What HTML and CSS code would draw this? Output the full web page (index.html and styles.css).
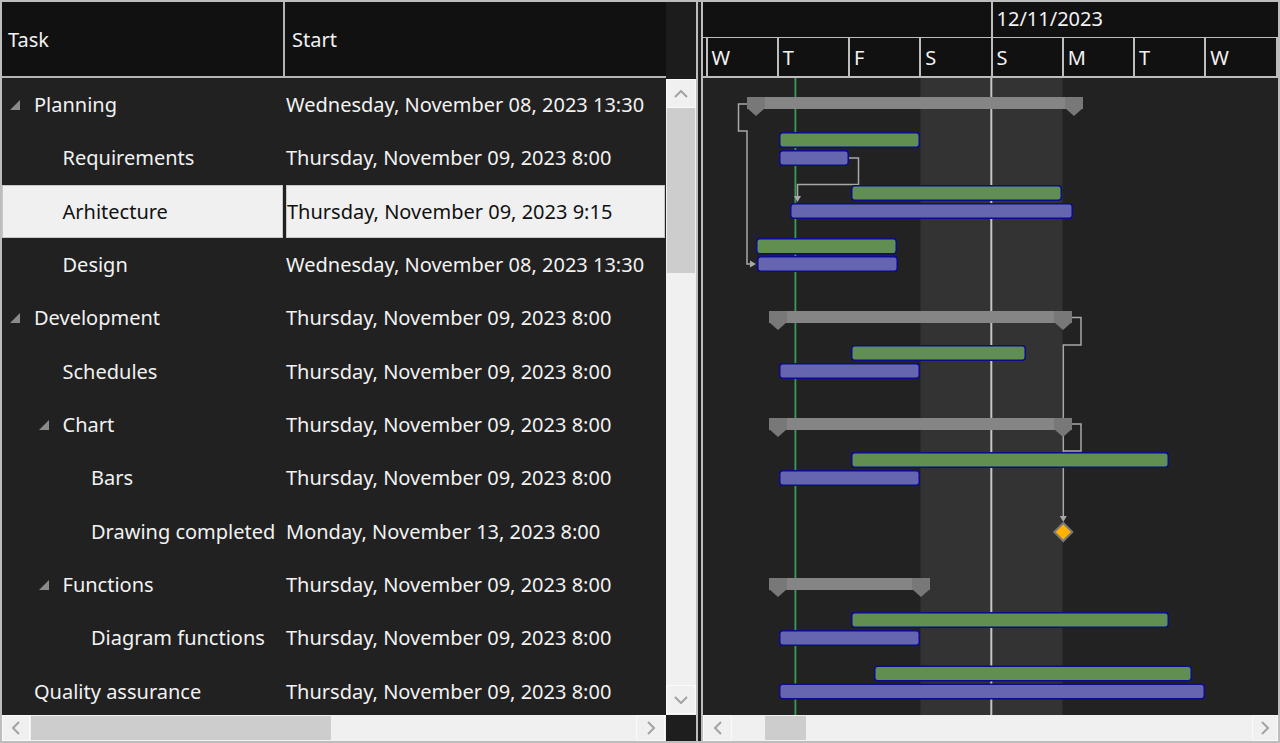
FILE: index.html
```html
<!DOCTYPE html>
<html lang="en">
<head>
<meta charset="utf-8">
<title>Gantt</title>
<link rel="stylesheet" href="styles.css">
</head>
<body>
<div class="app">
  <div class="grid-pane">
    <div class="grid-main">
      <div class="grid-cols">
        <div class="grid-head">
          <div class="gh-cell gh-task">Task</div>
          <div class="gh-cell gh-start">Start</div>
        </div>
        <div class="grid-body">
          <div class="row"><div class="cell c-task l0"><span class="tog"><svg class="tri" width="10" height="10" viewBox="0 0 10 10"><polygon points="10,0 10,10 0,10"/></svg></span>Planning</div><div class="cell c-start">Wednesday, November 08, 2023 13:30</div></div>
          <div class="row"><div class="cell c-task l1"><span class="tog"></span>Requirements</div><div class="cell c-start">Thursday, November 09, 2023 8:00</div></div>
          <div class="row sel"><div class="cell c-task l1"><span class="tog"></span>Arhitecture</div><div class="cell c-start">Thursday, November 09, 2023 9:15</div></div>
          <div class="row"><div class="cell c-task l1"><span class="tog"></span>Design</div><div class="cell c-start">Wednesday, November 08, 2023 13:30</div></div>
          <div class="row"><div class="cell c-task l0"><span class="tog"><svg class="tri" width="10" height="10" viewBox="0 0 10 10"><polygon points="10,0 10,10 0,10"/></svg></span>Development</div><div class="cell c-start">Thursday, November 09, 2023 8:00</div></div>
          <div class="row"><div class="cell c-task l1"><span class="tog"></span>Schedules</div><div class="cell c-start">Thursday, November 09, 2023 8:00</div></div>
          <div class="row"><div class="cell c-task l1"><span class="tog"><svg class="tri" width="10" height="10" viewBox="0 0 10 10"><polygon points="10,0 10,10 0,10"/></svg></span>Chart</div><div class="cell c-start">Thursday, November 09, 2023 8:00</div></div>
          <div class="row"><div class="cell c-task l2"><span class="tog"></span>Bars</div><div class="cell c-start">Thursday, November 09, 2023 8:00</div></div>
          <div class="row"><div class="cell c-task l2"><span class="tog"></span>Drawing completed</div><div class="cell c-start">Monday, November 13, 2023 8:00</div></div>
          <div class="row"><div class="cell c-task l1"><span class="tog"><svg class="tri" width="10" height="10" viewBox="0 0 10 10"><polygon points="10,0 10,10 0,10"/></svg></span>Functions</div><div class="cell c-start">Thursday, November 09, 2023 8:00</div></div>
          <div class="row"><div class="cell c-task l2"><span class="tog"></span>Diagram functions</div><div class="cell c-start">Thursday, November 09, 2023 8:00</div></div>
          <div class="row"><div class="cell c-task l0"><span class="tog"></span>Quality assurance</div><div class="cell c-start">Thursday, November 09, 2023 8:00</div></div>
        </div>
      </div>
      <div class="vscroll">
        <div class="vs-top"></div>
        <div class="vs-track">
          <div class="sb-btn vs-btn"><svg width="14" height="8" viewBox="0 0 14 8"><polyline class="chev" points="1,7 7,1 13,7"/></svg></div>
          <div class="vs-thumb"></div>
          <div class="vs-rest"></div>
          <div class="sb-btn vs-btn"><svg width="14" height="8" viewBox="0 0 14 8"><polyline class="chev" points="1,1 7,7 13,1"/></svg></div>
        </div>
      </div>
    </div>
    <div class="hs-row">
      <div class="hscroll grid-hs">
        <div class="sb-btn hs-btn"><svg width="8" height="14" viewBox="0 0 8 14"><polyline class="chev" points="7,1 1,7 7,13"/></svg></div>
        <div class="hs-thumb grid-thumb"></div>
        <div class="hs-rest"></div>
        <div class="sb-btn hs-btn"><svg width="8" height="14" viewBox="0 0 8 14"><polyline class="chev" points="1,1 7,7 1,13"/></svg></div>
      </div>
      <div class="corner"></div>
    </div>
  </div>
  <div class="splitter"></div>
  <div class="chart-pane">
    <div class="ch-top"><div class="ct-lead"></div><div class="ct-week">12/11/2023</div></div>
    <div class="ch-days">
      <div class="day">W</div><div class="day">T</div><div class="day">F</div><div class="day">S</div>
      <div class="day">S</div><div class="day">M</div><div class="day">T</div><div class="day last">W</div>
    </div>
    <div class="ch-body">
      <svg class="chart-svg" width="575" height="637" viewBox="703 78 575 637">
        <rect x="703" y="78" width="575" height="637" fill="#222222"/>
        <rect x="920.5" y="78" width="142" height="637" fill="#333333"/>
        <rect x="990.3" y="78" width="2" height="637" fill="#c4c4c4"/>
        <rect x="794.5" y="78" width="1.8" height="637" fill="#3a9a5a"/>
        <g class="links">
          <path d="M747,104 H738.5 V131 H747 V264 H751"/>
          <path d="M849,158 H858.5 V184.5 H797.5 V197"/>
          <path d="M1072,317.5 H1081 V345 H1063.3 V517"/>
          <path d="M1072,424 H1081 V451 H1063.3"/>
        </g>
        <g class="arrows">
          <polygon points="750,260.5 756,264 750,267.5"/>
          <polygon points="794,196 801,196 797.5,202"/>
          <polygon points="1059.8,516 1066.8,516 1063.3,522"/>
        </g>
        <g class="summary">
          <rect class="sbar" x="747" y="97" width="336" height="12"/>
          <polygon class="cap" points="747,97 765,97 765,108 756,116 747,108"/>
          <polygon class="cap" points="1065,97 1083,97 1083,108 1074,116 1065,108"/>
          <rect class="sbar" x="769" y="311" width="303" height="12"/>
          <polygon class="cap" points="769,311 787,311 787,322 778,330 769,322"/>
          <polygon class="cap" points="1054,311 1072,311 1072,322 1063,330 1054,322"/>
          <rect class="sbar" x="769" y="418" width="303" height="12"/>
          <polygon class="cap" points="769,418 787,418 787,429 778,437 769,429"/>
          <polygon class="cap" points="1054,418 1072,418 1072,429 1063,437 1054,429"/>
          <rect class="sbar" x="769" y="578" width="161" height="12"/>
          <polygon class="cap" points="769,578 787,578 787,589 778,597 769,589"/>
          <polygon class="cap" points="912,578 930,578 930,589 921,597 912,589"/>
        </g>
        <g class="tasks">
          <rect class="gb" x="779.75" y="132.75" width="139.5" height="14.5" rx="3"/>
          <rect class="bb" x="779.75" y="150.75" width="68.5" height="14.5" rx="3"/>
          <rect class="gb" x="851.75" y="185.75" width="209.5" height="14.5" rx="3"/>
          <rect class="bb" x="790.75" y="203.75" width="281.5" height="14.5" rx="3"/>
          <rect class="gb" x="756.75" y="238.75" width="139.5" height="15" rx="3"/>
          <rect class="bb" x="757.75" y="256.75" width="139.5" height="14.5" rx="3"/>
          <rect class="gb" x="851.75" y="345.75" width="173.5" height="14.5" rx="3"/>
          <rect class="bb" x="779.75" y="363.75" width="139.5" height="14.5" rx="3"/>
          <rect class="gb" x="851.75" y="452.75" width="316.5" height="14.5" rx="3"/>
          <rect class="bb" x="779.75" y="470.75" width="139.5" height="14.5" rx="3"/>
          <rect class="gb" x="851.75" y="612.75" width="316.5" height="14.5" rx="3"/>
          <rect class="bb" x="779.75" y="630.75" width="139.5" height="14.5" rx="3"/>
          <rect class="gb" x="874.75" y="666.25" width="316.5" height="14.5" rx="3"/>
          <rect class="bb" x="779.75" y="684.25" width="424.5" height="14.5" rx="3"/>
        </g>
        <polygon class="milestone" points="1063.3,523 1072.3,532 1063.3,541 1054.3,532"/>
      </svg>
    </div>
    <div class="hscroll chart-hs">
      <div class="sb-btn hs-btn"><svg width="8" height="14" viewBox="0 0 8 14"><polyline class="chev" points="7,1 1,7 7,13"/></svg></div>
      <div class="hs-gap"></div>
      <div class="hs-thumb chart-thumb"></div>
      <div class="hs-rest"></div>
      <div class="sb-btn hs-btn hs-btn-narrow"><svg width="8" height="14" viewBox="0 0 8 14"><polyline class="chev" points="1,1 7,7 1,13"/></svg></div>
    </div>
  </div>
</div>
</body>
</html>
```
FILE: styles.css
```css
* { box-sizing: border-box; }
html, body { margin: 0; padding: 0; }
body {
  width: 1280px;
  height: 743px;
  overflow: hidden;
  background: #222222;
  font-family: "Noto Sans", "Open Sans", sans-serif;
  font-size: 20px;
  color: #f2f2f2;
}
.app {
  display: flex;
  width: 1280px;
  height: 743px;
  border: 2px solid #bdbdbd;
  background: #222222;
}

/* ---------- grid ---------- */
.grid-pane { width: 694px; display: flex; flex-direction: column; flex: none; }
.grid-main { display: flex; height: 713px; }
.grid-cols { width: 664px; display: flex; flex-direction: column; }
.grid-head {
  height: 76px;
  display: grid;
  grid-template-columns: 283px 1fr;
  background: #111111;
  border-bottom: 2px solid #b4b4b4;
}
.gh-cell { display: flex; align-items: center; white-space: nowrap; }
.gh-task { padding-left: 6px; border-right: 2px solid #b4b4b4; }
.gh-start { padding-left: 7px; }
.grid-body { height: 637px; overflow: hidden; background: #212121; }
.row { height: 53.333px; display: grid; grid-template-columns: 283px 1fr; }
.cell { display: flex; align-items: center; white-space: nowrap; overflow: hidden; }
.l0 { padding-left: 8px; }
.l1 { padding-left: 36.5px; }
.l2 { padding-left: 65px; }
.tog { width: 24px; flex: none; display: flex; align-items: center; }
.tri polygon { fill: #8a8a8a; }
.c-start { padding-left: 1px; }
.row.sel .cell { background: #f0f0f0; color: #111111; box-shadow: inset 0 0 0 1px #c8c8c8; }
.row.sel .c-task { margin-right: 2px; }
.row.sel .c-start { margin-left: 1px; margin-right: 1px; }

/* ---------- scrollbars ---------- */
.chev { fill: none; stroke: #a3a3a3; stroke-width: 2; }
.sb-btn {
  display: flex;
  align-items: center;
  justify-content: center;
  background: #f0f0f0;
  border: 1px solid #fafafa;
  flex: none;
}
.vscroll { width: 30px; display: flex; flex-direction: column; background: #1c1c1c; }
.vs-top { height: 77px; flex: none; }
.vs-track { flex: 1; background: #f0f0f0; display: flex; flex-direction: column; padding-bottom: 1px; }
.vs-btn { height: 29px; }
.vs-thumb { height: 165px; background: #cdcdcd; margin: 0 1px; flex: none; }
.vs-rest { flex: 1; }

.hs-row { display: flex; height: 26px; }
.hscroll { display: flex; height: 26px; background: #f0f0f0; }
.grid-hs { width: 664px; padding-right: 1px; }
.hs-btn { width: 29px; }
.grid-hs .hs-btn:first-child { width: 28px; }
.hs-thumb { background: #cdcdcd; margin: 1px 0; flex: none; }
.grid-thumb { width: 300px; margin-left: 1px; }
.hs-rest { flex: 1; }
.corner { width: 30px; background: #1e1e1e; }

.splitter {
  width: 7px;
  flex: none;
  background: #1e1e1e;
  border-left: 2px solid #bdbdbd;
  border-right: 2px solid #bdbdbd;
}

/* ---------- chart ---------- */
.chart-pane { width: 575px; flex: none; display: flex; flex-direction: column; }
.ch-top { height: 36px; display: flex; background: #111111; border-bottom: 1px solid #bdbdbd; }
.ct-lead { width: 287.5px; flex: none; }
.ct-week { flex: 1; border-left: 2px solid #bdbdbd; padding-left: 4px; display: flex; align-items: center; padding-bottom: 2px; }
.ch-days {
  height: 40px;
  display: flex;
  background: #111111;
  border-bottom: 2px solid #bdbdbd;
  padding-left: 2.5px;
}
.day {
  width: 71.25px;
  flex: none;
  border-left: 2px solid #bdbdbd;
  padding-left: 4px;
  display: flex;
  align-items: center;
}
.day.last { border-right: 2px solid #bdbdbd; width: 73.25px; }
.ch-body { height: 637px; overflow: hidden; }
.chart-svg { display: block; }
.links path { fill: none; stroke: #a8a8a8; stroke-width: 1.5; }
.arrows polygon { fill: #a8a8a8; }
.sbar { fill: #858585; }
.cap { fill: #787878; }
.gb { fill: #618f52; stroke: #0b0b8f; stroke-width: 1.5; }
.bb { fill: #6565b0; stroke: #0b0b8f; stroke-width: 1.5; }
.milestone { fill: #ffb300; stroke: #7a7a7a; stroke-width: 2; }
.chart-hs { width: 575px; }
.hs-gap { width: 33px; flex: none; }
.chart-thumb { width: 41px; }
.hs-btn-narrow { width: 26px; }
```
